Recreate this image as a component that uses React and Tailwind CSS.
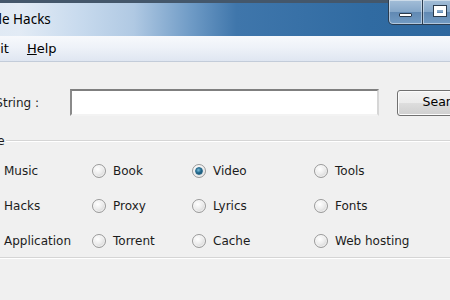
import React from 'react';

const rows = [
  ['Music', 'Book', 'Video', 'Tools'],
  ['Hacks', 'Proxy', 'Lyrics', 'Fonts'],
  ['Application', 'Torrent', 'Cache', 'Web hosting'],
];

function Radio({ checked }) {
  return (
    <span className="relative flex h-[14px] w-[14px] shrink-0 items-center justify-center rounded-full border border-[#9a9a9a] bg-[radial-gradient(circle_at_40%_35%,#ffffff_0%,#ececec_45%,#c4c4c4_100%)] shadow-[inset_0_0_0_1px_rgba(255,255,255,0.6)]">
      {checked && (
        <span className="h-[8px] w-[8px] rounded-full border border-[#2c6d8f] bg-[radial-gradient(circle_at_40%_35%,#7cc0de_0%,#236a8e_50%,#143f58_100%)]" />
      )}
    </span>
  );
}

export default function App() {
  return (
    <div className="h-[300px] w-[450px] overflow-hidden bg-[#f0f0f0] font-['DejaVu_Sans',sans-serif] text-[12px] text-[#1c1c1c]">
      <div className="-ml-[60px] w-[570px]">
        {/* Title bar */}
        <div className="flex h-[36px] items-start border-t-[3px] border-[#44576b] bg-[linear-gradient(90deg,#dce7f2_0%,#e2ebf5_14%,#c9dbee_24%,#b0c9e3_34%,#6f9bc6_44%,#3f76ab_52%,#306ba2_75%,#2c659c_100%)]">
          <div className="flex h-full flex-1 items-center whitespace-nowrap pl-[24px] font-['Noto_Sans',sans-serif] text-[13.5px] text-black">
            Google Hacks
          </div>
          <div className="-mt-[3px] flex">
            <div className="flex h-[25px] w-[35px] items-center justify-center rounded-bl-[5px] border border-t-0 border-[#2a3c50] bg-[linear-gradient(180deg,#a3bed8_0%,#84a6c8_50%,#6189b3_51%,#729bc3_100%)] shadow-[inset_0_0_0_1px_rgba(255,255,255,0.45)]">
              <span className="mt-[6px] h-[4px] w-[13px] rounded-[1px] border border-[#2b3b4d] bg-white" />
            </div>
            <div className="flex h-[25px] w-[35px] items-center justify-center border border-l-0 border-t-0 border-[#2a3c50] bg-[linear-gradient(180deg,#a3bed8_0%,#84a6c8_50%,#6189b3_51%,#729bc3_100%)] shadow-[inset_0_0_0_1px_rgba(255,255,255,0.45)]">
              <span className="-mt-[2px] h-[10px] w-[12px] border-[3px] border-t-[4px] border-white outline outline-1 outline-[#2b3b4d]" />
            </div>
            <div className="h-[25px] w-[52px] border border-l-0 border-t-0 border-[#5a1f1f] bg-[linear-gradient(180deg,#e39a8a_0%,#cf5a46_50%,#b9341f_51%,#d15a3e_100%)]" />
          </div>
        </div>

        {/* Menu bar */}
        <div className="flex h-[26px] items-center gap-[18px] border-b border-[#c3ccd9] bg-[linear-gradient(180deg,#f7f9fc_0%,#eef2f8_45%,#dfe6f1_100%)] pl-[4px] text-[13px] text-black">
          <span><u>F</u>ile</span>
          <span><u>E</u>dit</span>
          <span><u>H</u>elp</span>
        </div>

        {/* Content */}
        <div className="pt-[27px]">
          <div className="flex h-[27px] items-center">
            <div className="flex w-[99px] justify-end whitespace-nowrap">Search String :</div>
            <div className="ml-[31px] h-[27px] w-[309px] border-2 border-b-[#f3f3f3] border-l-[#8a8a8a] border-r-[#d6d6d6] border-t-[#7f7f7f] bg-white" />
            <button className="ml-[18px] flex h-[26px] w-[94px] shrink-0 items-center justify-center rounded-[3px] border border-[#707070] bg-[linear-gradient(180deg,#f3f3f3_0%,#ebebeb_50%,#dddddd_51%,#cfcfcf_100%)] text-[12.5px] text-black shadow-[inset_0_0_0_1px_#fcfcfc]">
              Search
            </button>
          </div>

          <div className="mt-[18px] flex h-[14px] items-center pl-[30px]">
            <span className="h-[2px] w-[6px] border-t border-b border-t-[#d5d5d5] border-b-white" />
            <span className="px-[1px] leading-none">Type</span>
            <span className="h-[2px] flex-1 border-t border-b border-t-[#d5d5d5] border-b-white" />
          </div>

          <div className="pt-[5px] pl-[43px]">
            {rows.map((row, i) => (
              <div key={i} className="grid h-[35px] grid-cols-[109px_100px_122px_1fr] items-center">
                {row.map((label) => (
                  <label key={label} className="flex items-center gap-[7px] whitespace-nowrap">
                    <Radio checked={label === 'Video'} />
                    <span>{label}</span>
                  </label>
                ))}
              </div>
            ))}
          </div>
          <div className="-mt-[1px] ml-[30px] h-[2px] border-t border-b border-t-[#d5d5d5] border-b-white" />
        </div>
      </div>
    </div>
  );
}
